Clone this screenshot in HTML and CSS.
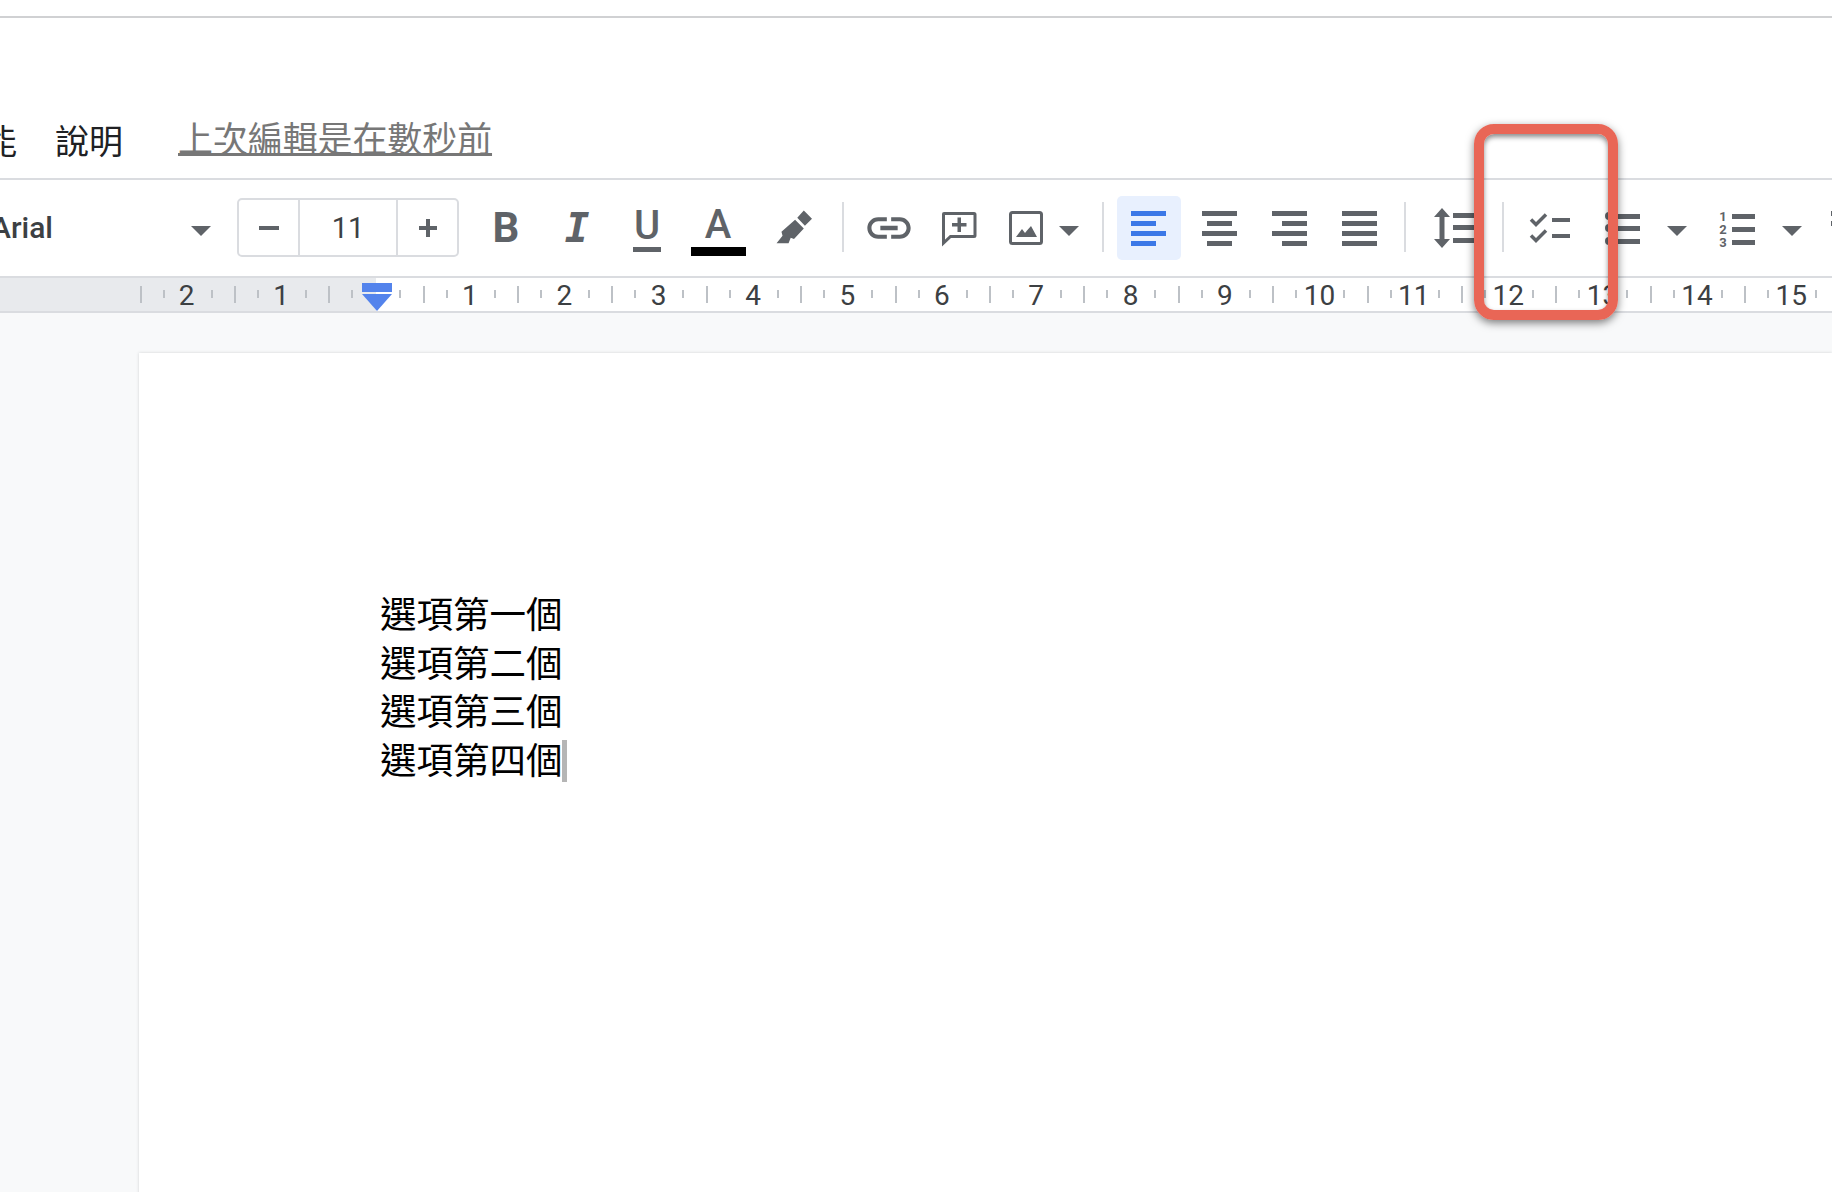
FILE: index.html
```html
<!DOCTYPE html>
<html lang="zh-Hant">
<head>
<meta charset="utf-8">
<title>Docs</title>
<link rel="stylesheet" href="styles.css">
</head>
<body>
<div class="app">
  <div class="topbar"></div>
  <div class="menubar">
    <span class="menu-item menu-cut">能</span>
    <span class="menu-item">說明</span>
    <a class="last-edit">上次編輯是在數秒前</a>
  </div>
  <div class="toolbar">
    <span class="font-name">Arial</span>
    <i class="caret caret-font"></i>
    <div class="size-box">
      <span class="size-btn"><svg width="24" height="24" viewBox="0 0 24 24"><rect x="2" y="10" width="20" height="4" class="ic"/></svg></span>
      <span class="size-val">11</span>
      <span class="size-btn"><svg width="24" height="24" viewBox="0 0 24 24"><path class="ic" d="M10 3h4v7h7v4h-7v7h-4v-7H3v-4h7z"/></svg></span>
    </div>
    <span class="btn btn-b">B</span>
    <span class="btn btn-i">I</span>
    <span class="btn btn-u"><span class="u-letter">U</span></span>
    <span class="btn btn-a"><span class="a-letter">A</span></span>
    <span class="btn hl"><svg width="48" height="48" viewBox="0 0 44 44"><path class="ic" d="M25 12.5 31 6l7.5 7.500-6.500 6.500zM23 14.500l8 8-9 9.500-3-1-2 5H6l5.500-7-1-3.500z"/></svg></span>
    <i class="sep sep-1"></i>
    <span class="btn link"><svg width="52" height="52" viewBox="0 0 24 24"><path class="ic" d="M3.900 12c0-1.710 1.390-3.100 3.100-3.100h4V7H7c-2.760 0-5 2.240-5 5s2.240 5 5 5h4v-1.900H7c-1.710 0-3.100-1.390-3.100-3.100zM8 13h8v-2H8v2zm9-6h-4v1.900h4c1.710 0 3.100 1.390 3.100 3.100s-1.390 3.100-3.100 3.100h-4V17h4c2.760 0 5-2.240 5-5s-2.240-5-5-5z"/></svg></span>
    <span class="btn"><svg width="44" height="44" viewBox="0 0 44 44"><path class="ol" d="M7 7.500h30a1 1 0 0 1 1 1v21a1 1 0 0 1-1 1H13.500L6.500 37V8a.5.5 0 0 1 .5-.5z"/><path class="ic" d="M20.500 11.500h3.500v5.500h5.500v3.500H24v5.500h-3.500v-5.500H15V17h5.500z"/></svg></span>
    <span class="btn btn-img"><svg width="44" height="44" viewBox="0 0 44 44"><rect class="ol" x="6.500" y="6.500" width="31" height="31" rx="2"/><path class="ic" d="M12 31l6-8 3 4 2-2.500L27 20l6 11z"/></svg></span>
    <i class="caret caret-img"></i>
    <i class="sep sep-2"></i>
    <span class="btn btn-active"><svg width="44" height="44" viewBox="0 0 44 44"><rect class="ic-blue" x="4" y="5" width="35" height="5"/><rect class="ic-blue" x="4" y="15" width="25" height="5"/><rect class="ic-blue" x="4" y="25" width="35" height="5"/><rect class="ic-blue" x="4" y="35" width="25" height="5"/></svg></span>
    <span class="btn btn-center"><svg width="44" height="44" viewBox="0 0 44 44"><rect class="ic" x="4" y="5" width="35" height="5"/><rect class="ic" x="9" y="15" width="25" height="5"/><rect class="ic" x="4" y="25" width="35" height="5"/><rect class="ic" x="9" y="35" width="25" height="5"/></svg></span>
    <span class="btn"><svg width="44" height="44" viewBox="0 0 44 44"><rect class="ic" x="4" y="5" width="35" height="5"/><rect class="ic" x="14" y="15" width="25" height="5"/><rect class="ic" x="4" y="25" width="35" height="5"/><rect class="ic" x="14" y="35" width="25" height="5"/></svg></span>
    <span class="btn"><svg width="44" height="44" viewBox="0 0 44 44"><rect class="ic" x="4" y="5" width="35" height="5"/><rect class="ic" x="4" y="15" width="35" height="5"/><rect class="ic" x="4" y="25" width="35" height="5"/><rect class="ic" x="4" y="35" width="35" height="5"/></svg></span>
    <i class="sep sep-3"></i>
    <span class="btn btn-spacing"><svg width="44" height="44" viewBox="0 0 44 44"><path class="ic" d="M9 2l8 9h-5.500v22H17l-8 9-8-9h5.500V11H1z"/><rect class="ic" x="20" y="7" width="24" height="5"/><rect class="ic" x="20" y="19" width="24" height="5"/><rect class="ic" x="20" y="32" width="24" height="5"/></svg></span>
    <i class="sep sep-4"></i>
    <span class="btn btn-check"><svg width="44" height="44" viewBox="0 0 44 44"><path class="ck" d="M3 13.500l5 5L18 8.500M3 29.500l5 5 10-10"/><rect class="ic" x="24" y="12" width="18" height="4"/><rect class="ic" x="24" y="28" width="18" height="4"/></svg></span>
    <span class="btn btn-bullets"><svg width="44" height="44" viewBox="0 0 44 44"><circle class="ic" cx="10" cy="10" r="4"/><circle class="ic" cx="10" cy="22" r="4"/><circle class="ic" cx="10" cy="35" r="4"/><rect class="ic" x="18" y="8" width="23" height="5"/><rect class="ic" x="18" y="20" width="23" height="5"/><rect class="ic" x="18" y="33" width="23" height="5"/></svg></span>
    <i class="caret caret-bullets"></i>
    <span class="btn btn-num"><svg width="44" height="44" viewBox="0 0 44 44"><text class="num" x="12" y="15">1</text><text class="num" x="12" y="28">2</text><text class="num" x="12" y="41">3</text><rect class="ic" x="21" y="8" width="23" height="5"/><rect class="ic" x="21" y="21" width="23" height="5"/><rect class="ic" x="21" y="34" width="23" height="5"/></svg></span>
    <i class="caret caret-num"></i>
    <span class="btn btn-indent"><svg width="44" height="44" viewBox="0 0 44 44"><rect class="ic" x="4" y="5" width="35" height="5"/><rect class="ic" x="4" y="15" width="35" height="5"/></svg></span>
  </div>
  <div class="ruler">
    <span class="inch">2</span><span class="inch">1</span><span class="inch"></span><span class="inch">1</span><span class="inch">2</span><span class="inch">3</span><span class="inch">4</span><span class="inch">5</span><span class="inch">6</span><span class="inch">7</span><span class="inch">8</span><span class="inch">9</span><span class="inch">10</span><span class="inch">11</span><span class="inch">12</span><span class="inch">13</span><span class="inch">14</span><span class="inch">15</span>
    <div class="indent-marker"><i class="indent-bar"></i><i class="indent-tri"></i></div>
  </div>
  <div class="workspace">
    <div class="page">
      <p class="doc-line">選項第一個</p>
      <p class="doc-line">選項第二個</p>
      <p class="doc-line">選項第三個</p>
      <p class="doc-line">選項第四個<i class="cursor"></i></p>
    </div>
  </div>
  <div class="callout"></div>
</div>
</body>
</html>
```
FILE: styles.css
```css
* { box-sizing: border-box; }
html, body { margin: 0; padding: 0; background: #fff; }
.app {
  position: relative;
  width: 1832px;
  height: 1192px;
  overflow: hidden;
  display: flex;
  flex-direction: column;
  font-family: Roboto, "Noto Sans CJK TC", sans-serif;
}
.topbar { height: 18px; flex: none; border-bottom: 2px solid #d0d1d3; }

.menubar {
  height: 162px;
  flex: none;
  display: flex;
  align-items: center;
  padding: 84px 0 0 0;
  border-bottom: 2px solid #dadce0;
  overflow: hidden;
}
.menu-item { font: 400 34px/44px "Noto Sans CJK TC", sans-serif; color: #202124; white-space: nowrap; }
.menu-cut { margin-left: -17px; margin-right: 38px; }
.last-edit {
  margin-left: 55px;
  margin-top: -7px;
  font: 400 34.900px/44px "Noto Sans CJK TC", sans-serif;
  color: #777;
  text-decoration: underline;
  text-decoration-thickness: 3px;
  text-underline-offset: 1px;
  white-space: nowrap;
}

.ic { fill: #5f6368; }
.ic-blue { fill: #3b78e7; }
.ol { fill: none; stroke: #5f6368; stroke-width: 3; }
.ck { fill: none; stroke: #5f6368; stroke-width: 3.500; }
.num { fill: #5f6368; font: 700 13px Roboto, sans-serif; text-anchor: middle; }

.toolbar {
  height: 98px;
  flex: none;
  display: flex;
  align-items: center;
  border-bottom: 2px solid #dadce0;
  overflow: hidden;
  color: #5f6368;
}
.font-name { width: 53px; margin-left: -9px; flex: none; font: 500 30px/1 Roboto, sans-serif; color: #3c4043; white-space: nowrap; margin-right: 147px; }
.caret { flex: none; width: 0; height: 0; border-left: 10px solid transparent; border-right: 10px solid transparent; border-top: 10px solid #5f6368; margin-top: 6px; }
.caret-font { margin-right: 26px; }
.size-box { flex: none; width: 222px; height: 59px; display: flex; border: 2px solid #dadce0; border-radius: 5px; margin-top: -1px; }
.size-btn { flex: none; width: 59px; display: flex; align-items: center; justify-content: center; }
.size-val { flex: 1; border-left: 2px solid #dadce0; border-right: 2px solid #dadce0; text-align: center; font: 400 29px/57px Roboto, sans-serif; color: #3c4043; }

.btn { flex: none; width: 70px; height: 64px; display: flex; align-items: center; justify-content: center; border-radius: 5px; }
.btn-b { margin-left: 12px; font: 700 42px/1 Roboto, sans-serif; }
.btn-i { margin-left: 1px; font: italic 700 41px/1 "DejaVu Sans Mono", monospace; }
.btn-u { font: 500 40px/1 Roboto, sans-serif; }
.u-letter { display: block; border-bottom: 5px solid #5f6368; padding: 0 1px 0; line-height: 42px; }
.btn-a { margin-left: 1px; font: 500 40px/1 Roboto, sans-serif; }
.a-letter { display: block; width: 55px; text-align: center; border-bottom: 9px solid #000; line-height: 44px; margin-top: 3px; }
.hl { margin-left: 6px; }
.sep { flex: none; width: 2px; height: 50px; background: #dadce0; margin-top: -3px; }
.sep-1 { margin-left: 13px; }
.link { margin-left: 10px; }
.btn-img { width: 66px; margin-left: -1px; }
.caret-img { margin-left: 0; }
.sep-2 { margin-left: 23px; }
.btn-active { width: 64px; background: #e8f0fe; margin-left: 13px; }
.btn-center { margin-left: 4px; }
.sep-3 { margin-left: 9px; }
.btn-spacing { margin-left: 14px; }
.sep-4 { margin-left: 12px; }
.btn-check { margin-left: 11px; }
.btn-bullets { margin-left: 1px; }
.caret-bullets { margin-left: 11px; }
.btn-num { margin-left: 11px; }
.caret-num { margin-left: 14px; }
.btn-indent { margin-left: 12px; }

.ruler {
  position: relative;
  height: 35px;
  flex: none;
  display: flex;
  align-items: center;
  padding-left: 139.500px;
  border-bottom: 2px solid #dadce0;
  overflow: hidden;
  background: linear-gradient(to right, #e8eaed 376px, #fff 376px);
}
.inch {
  flex: 0 0 94.400px;
  height: 33px;
  text-align: center;
  font: 400 28px/35px Roboto, sans-serif;
  color: #3c4043;
  background:
    linear-gradient(#bdc1c6, #bdc1c6) 0 8px / 2px 17px no-repeat,
    linear-gradient(#bdc1c6, #bdc1c6) 23px 12px / 2px 8px no-repeat,
    linear-gradient(#bdc1c6, #bdc1c6) 71px 12px / 2px 8px no-repeat;
}
.indent-marker { position: absolute; left: 362px; top: 5px; width: 30px; }
.indent-bar { display: block; height: 9px; background: #5383ec; margin-bottom: 2px; }
.indent-tri { display: block; width: 0; height: 0; border-left: 15px solid transparent; border-right: 15px solid transparent; border-top: 17px solid #5383ec; }

.workspace { flex: 1; background: #f8f9fa; padding: 40px 0 0 139px; overflow: hidden; }
.page {
  height: 900px;
  background: #fff;
  box-shadow: 0 0 3px rgba(60, 64, 67, .2);
  padding: 236px 0 0 241px;
}
.doc-line { margin: 0; font: 400 36.500px/48.600px "Noto Sans CJK TC", sans-serif; color: #000; white-space: nowrap; }
.cursor { display: inline-block; width: 5px; height: 42px; background: #b5b5b5; vertical-align: -8px; margin-left: -1px; }

.callout {
  position: absolute;
  left: 1474px;
  top: 124px;
  width: 144px;
  height: 196px;
  border: 10px solid #e96656;
  border-radius: 20px;
  box-shadow: 0 3px 8px rgba(0, 0, 0, .5), inset 0 3px 5px rgba(0, 0, 0, .45);
}
```
